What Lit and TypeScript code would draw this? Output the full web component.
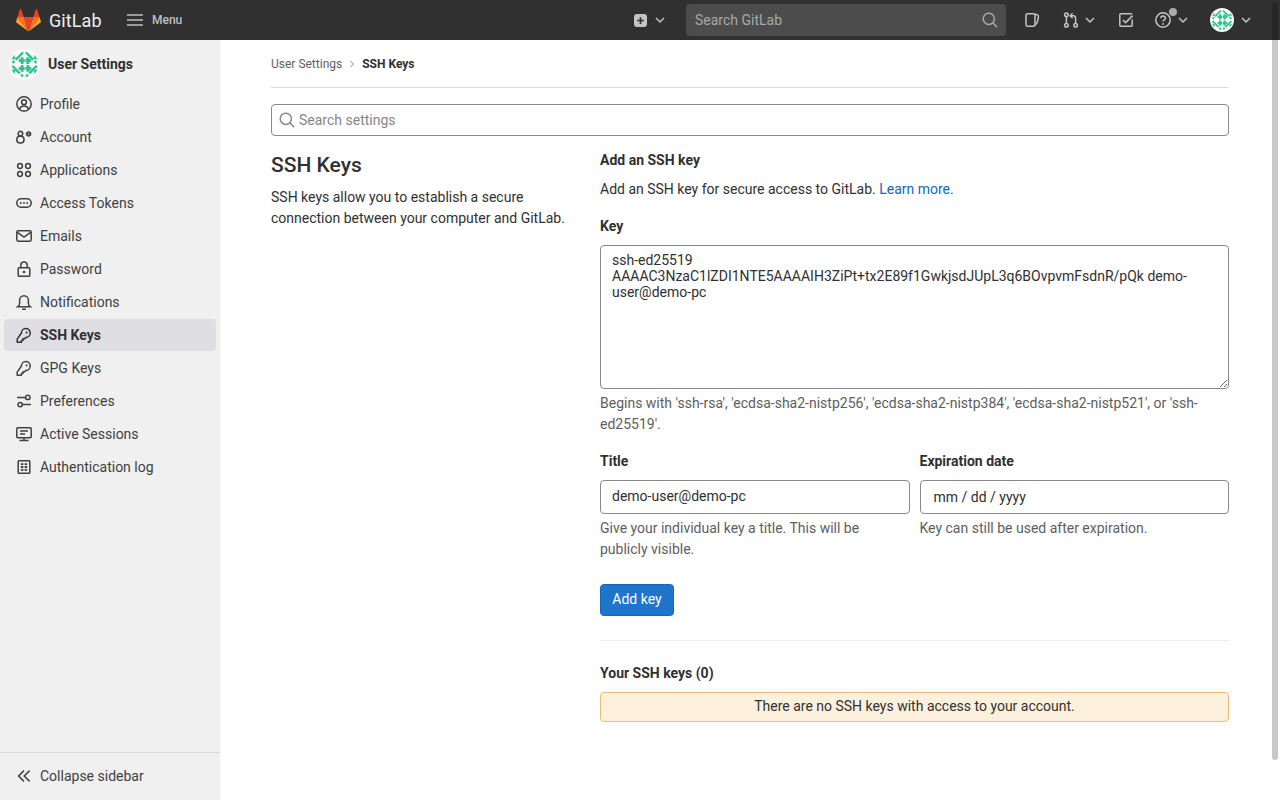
import { LitElement, css, html, svg } from "lit";
import { customElement } from "lit/decorators.js";

const icon = (d: unknown, cls = "") =>
  html`<svg class="ic ${cls}" viewBox="0 0 16 16" fill="none" stroke="currentColor" stroke-width="1.5">${d}</svg>`;

const icons: Record<string, unknown> = {
  profile: svg`<circle cx="8" cy="8" r="7.2"/><circle cx="8" cy="6.2" r="2.4"/><path d="M3.6 13.2c.6-2.2 2.3-3.2 4.4-3.2s3.8 1 4.4 3.2"/>`,
  account: svg`<circle cx="4.4" cy="4.6" r="2.3"/><rect x=".8" y="7.2" width="7.2" height="6.8" rx="3.2"/><path d="M12.6 2.4l2.3 1.3v2.5l-2.3 1.3-2.3-1.3V3.7z" fill="currentColor" stroke-width=".8"/><circle cx="12.6" cy="5" r=".7" fill="#f0f0f0" stroke="none"/>`,
  apps: svg`<circle cx="4" cy="4" r="2.4"/><circle cx="12" cy="4" r="2.4"/><circle cx="4" cy="12" r="2.4"/><circle cx="12" cy="12" r="2.4"/>`,
  token: svg`<rect x=".8" y="3.8" width="14.4" height="8.4" rx="4.2"/><circle cx="4.8" cy="8" r=".9" fill="currentColor" stroke="none"/><circle cx="8" cy="8" r=".9" fill="currentColor" stroke="none"/><circle cx="11.2" cy="8" r=".9" fill="currentColor" stroke="none"/>`,
  mail: svg`<rect x=".8" y="2.8" width="14.4" height="10.4" rx="1.4"/><path d="M1 4.2l7 5 7-5"/>`,
  lock: svg`<rect x="2.2" y="6.8" width="11.6" height="8.4" rx=".8"/><path d="M4.8 6.8V4.2a3.2 3.2 0 0 1 6.4 0v2.6"/><circle cx="8" cy="11" r="1.3" fill="currentColor" stroke="none"/>`,
  bell: svg`<path d="M1.6 12.8c1.4-.8 2-1.6 2-3V6.2a4.4 4.4 0 0 1 8.8 0v3.6c0 1.4.6 2.2 2 3z"/><path d="M6 15.2h4"/>`,
  key: svg`<path d="M5.4 6a4.4 4.4 0 1 1 4.6 4.4L8.6 11.8H7v1.7H5.4v1.7H1.2v-3.1z" stroke-linejoin="round"/><circle cx="10.6" cy="5.4" r="1" fill="currentColor" stroke="none"/>`,
  prefs: svg`<circle cx="11.8" cy="4.4" r="2.2"/><circle cx="4.2" cy="11.6" r="2.2"/><path d="M1 4.6h8.4M6.6 11.6H15"/>`,
  monitor: svg`<rect x=".8" y="1.8" width="14.4" height="10" rx="1"/><path d="M4 5h8M4 8h5M8 12v2.4M3.5 14.4h9"/>`,
  log: svg`<rect x="2.2" y="1.8" width="11.6" height="12.4" rx=".8"/><path d="M4.8 5.2h2.6M8.6 5.2h2.6M4.8 8h2.6M8.6 8h2.6M4.8 10.8h2.6M8.6 10.8h2.6" stroke-width="1.8"/>`,
  collapse: svg`<path d="M8 2.6L2.6 8 8 13.4M13.6 2.6L8.2 8l5.4 5.4"/>`,
  chevron: svg`<path d="M4 6l4 4 4-4"/>`,
  search: svg`<circle cx="6.8" cy="6.8" r="5.6"/><path d="M11 11l4.2 4.2"/>`,
  issues: svg`<path d="M2 3.2c0-.8.5-1.4 1.4-1.4h6.2c.9 0 1.4.6 1.4 1.4v9.6c0 .8-.5 1.4-1.4 1.4H3.4c-.9 0-1.4-.6-1.4-1.4z"/><path d="M11 2.6h1.2c1.6 0 2.6 1.2 2.2 2.8l-1.2 5-2.2 3"/>`,
  mr: svg`<circle cx="3.4" cy="2.8" r="1.8"/><circle cx="3.4" cy="13.2" r="1.8"/><circle cx="12.6" cy="13.2" r="1.8"/><path d="M3.4 4.6v6.8M12.6 11.4V6c0-1.4-.8-2.2-2.2-2.2H7.6M9.6 1.2L7.2 3.8l2.4 2.4"/>`,
  todo: svg`<path d="M14.2 7.5v5.7c0 .6-.4 1-1 1H2.8c-.6 0-1-.4-1-1V2.8c0-.6.4-1 1-1h11.4"/><path d="M5 8l2.6 2.6L14.6 3.6"/>`,
};

// identicon: white disc, broken green diamond, four blobs in the middle
const avatar = (size: number) => html`<svg class="avatar" width=${size} height=${size} viewBox="0 0 32 32">
  <circle cx="16" cy="16" r="16" fill="#fbfcfb"/>
  <g fill="none" stroke="#2bc48f" stroke-width="2.4">
    <path d="M14.6 3.4L3.4 14.6M17.4 3.4l11.2 11.2M3.4 17.4l11.2 11.2M28.6 17.4L17.4 28.6" stroke-dasharray="11 1.6 3"/>
  </g>
  <g fill="#2bc48f">
    <path d="M2.5 21l4 1-1 4zM29.5 21l-4 1 1 4zM2.5 11l4-1-1-4zM29.5 11l-4-1 1-4z"/>
    <path d="M10 10.4h2v-2h3v2h1.2v3H15v2h-3v-2h-2zM17 10.4h1v-2h3v2h2v3h-2v2h-3v-2h-1zM10 18.6h2v-2h3v2h1.2v3H15v2h-3v-2h-2zM17 18.6h1v-2h3v2h2v3h-2v2h-3v-2h-1z"/>
  </g>
</svg>`;

const navItems = [
  { label: "Profile", icon: "profile" },
  { label: "Account", icon: "account" },
  { label: "Applications", icon: "apps" },
  { label: "Access Tokens", icon: "token" },
  { label: "Emails", icon: "mail" },
  { label: "Password", icon: "lock" },
  { label: "Notifications", icon: "bell" },
  { label: "SSH Keys", icon: "key", active: true },
  { label: "GPG Keys", icon: "key" },
  { label: "Preferences", icon: "prefs" },
  { label: "Active Sessions", icon: "monitor" },
  { label: "Authentication log", icon: "log" },
];

const keyValue =
  "ssh-ed25519 AAAAC3NzaC1lZDI1NTE5AAAAIH3ZiPt+tx2E89f1GwkjsdJUpL3q6BOvpvmFsdnR/pQk demo-user@demo-pc";

@customElement("app-root")
export class AppRoot extends LitElement {
  static styles = css`
    :host {
      display: block;
      height: 800px;
      overflow: hidden;
      position: relative;
      font-family: Roboto, "Liberation Sans", sans-serif;
      font-size: 14px;
      color: #303030;
      background: #fff;
    }
    * {
      box-sizing: border-box;
    }
    .ic {
      width: 16px;
      height: 16px;
      flex: none;
      display: block;
    }
    .top {
      height: 40px;
      background: #303030;
      color: #c4c4c4;
      display: flex;
      align-items: center;
    }
    .brand {
      display: flex;
      align-items: center;
      margin-left: 16px;
      width: 111px;
      gap: 8px;
    }
    .brand-name {
      font-size: 18px;
      color: #eee;
      letter-spacing: 0.1px;
    }
    .menu {
      display: flex;
      align-items: center;
      gap: 9px;
      font-size: 12px;
      font-weight: 500;
      color: #bfbfbf;
    }
    .menu svg {
      width: 16px;
      height: 16px;
      stroke-width: 1.4;
    }
    .spacer {
      flex: 1;
    }
    .new {
      display: flex;
      align-items: center;
      gap: 5px;
      margin-right: 18px;
    }
    .plus {
      width: 13px;
      height: 13px;
      border-radius: 3px;
      background: #c4c4c4;
      display: grid;
      place-items: center;
      color: #303030;
    }
    .plus svg {
      width: 9px;
      height: 9px;
      stroke-width: 3;
    }
    .top-search {
      width: 320px;
      height: 32px;
      border-radius: 4px;
      background: #4c4c4c;
      color: #a8a8a8;
      display: flex;
      align-items: center;
      justify-content: space-between;
      padding: 0 8px 0 9px;
      margin-right: 18px;
    }
    .top-icons {
      display: flex;
      align-items: center;
      margin-right: 26px;
    }
    .pair {
      display: flex;
      align-items: center;
      gap: 3px;
      position: relative;
    }
    .gap-issues {
      margin-right: 23px;
    }
    .gap-mr {
      margin-right: 20px;
    }
    .gap-todo {
      margin-right: 21px;
    }
    .gap-help {
      margin-right: 19px;
      gap: 4px;
    }
    .gap-user {
      gap: 4px;
    }
    .dot {
      position: absolute;
      left: 14px;
      top: -4px;
      width: 8px;
      height: 8px;
      border-radius: 50%;
      background: #aaa;
    }
    .avatar {
      flex: none;
      display: block;
    }
    .body {
      display: flex;
      height: 760px;
    }
    .side {
      width: 220px;
      flex: none;
      background: #f0f0f0;
      display: flex;
      flex-direction: column;
    }
    .ctx {
      height: 48px;
      display: flex;
      align-items: center;
      gap: 8px;
      padding-left: 9px;
      font-weight: 700;
      color: #303030;
    }
    .nav {
      flex: 1;
      padding: 0 4px;
    }
    .nav-item {
      height: 32px;
      margin-bottom: 1px;
      display: flex;
      align-items: center;
      gap: 8px;
      padding-left: 12px;
      border-radius: 4px;
      color: #404040;
    }
    .nav-item.active {
      background: #dfdfe3;
      font-weight: 700;
      color: #303030;
    }
    .collapse {
      height: 48px;
      border-top: 1px solid #dcdcdc;
      display: flex;
      align-items: center;
      gap: 8px;
      padding: 0 0 2px 16px;
      color: #404040;
    }
    .main {
      flex: 1;
      padding: 0 51px;
    }
    .crumbs {
      height: 48px;
      border-bottom: 1px solid #dcdcdc;
      display: flex;
      align-items: center;
      font-size: 12px;
      color: #5e5e5e;
      gap: 6px;
    }
    .crumbs svg {
      width: 8px;
      height: 8px;
    }
    .crumbs b {
      color: #303030;
      font-weight: 700;
    }
    .settings-search {
      margin-top: 16px;
      height: 32px;
      border: 1px solid #89888d;
      border-radius: 4px;
      display: flex;
      align-items: center;
      gap: 4px;
      padding-left: 7px;
      color: #868686;
      font-size: 14px;
    }
    .columns {
      display: flex;
      margin-top: 14px;
    }
    .intro {
      width: 329px;
      flex: none;
      padding-top: 1px;
    }
    .intro h1 {
      margin: 0;
      font-size: 21px;
      line-height: 28px;
      font-weight: 500;
      color: #303030;
    }
    .intro p {
      margin: 8px 30px 0 0;
      line-height: 21px;
      color: #303030;
    }
    .form {
      flex: 1;
      min-width: 0;
    }
    .form-title {
      font-weight: 700;
      line-height: 20px;
    }
    .lead {
      margin: 9px 0 0;
      line-height: 20px;
    }
    .lead a {
      color: #1068bf;
      text-decoration: none;
    }
    label,
    .label {
      display: block;
      font-weight: 700;
      line-height: 20px;
    }
    .key-label {
      margin-top: 17px;
    }
    textarea,
    input {
      display: block;
      width: 100%;
      font: inherit;
      color: #303030;
      background: #fff;
      border: 1px solid #89888d;
      border-radius: 4px;
      outline: none;
    }
    textarea {
      margin-top: 9px;
      height: 144px;
      padding: 6px 11px;
      line-height: 16px;
    }
    .hint {
      margin: 4px 0 0;
      color: #5e5e5e;
      line-height: 21px;
    }
    .pair-fields {
      display: grid;
      grid-template-columns: 1fr 1fr;
      gap: 10px;
      margin-top: 16px;
    }
    .pair-fields input {
      margin-top: 9px;
      height: 34px;
      padding: 0 11px 2px;
    }
    .pair-fields input.date {
      padding: 0 13px;
    }
    .add {
      margin-top: 24px;
      height: 32px;
      width: 74px;
      background: #1f75cb;
      color: #fff;
      border: 1px solid #1068bf;
      border-radius: 4px;
      font: inherit;
      padding: 0 0 2px;
    }
    hr {
      border: 0;
      border-top: 1px solid #ececef;
      margin: 24px 0 0;
    }
    .your {
      margin-top: 22px;
    }
    .empty {
      margin-top: 9px;
      height: 30px;
      padding-bottom: 2px;
      background: #fdf1dd;
      border: 1px solid #e9be74;
      border-radius: 4px;
      display: flex;
      align-items: center;
      justify-content: center;
      color: #303030;
    }
    .scrollbar {
      position: absolute;
      top: 40px;
      right: 2px;
      width: 6px;
      height: 720px;
      background: #c8c8c8;
      border-radius: 0 0 3px 3px;
    }
    .scrollbar-top {
      position: absolute;
      top: 2px;
      right: 2px;
      width: 6px;
      height: 38px;
      background: #262626;
      border-radius: 3px 3px 0 0;
    }
  `;

  render() {
    return html`
      <div class="top">
        <div class="brand">
          <svg width="25" height="24" viewBox="0 0 25 24">
            <path d="M12.5 23.5L.4 14.6c-.4-.3-.5-.7-.3-1.1L1.5 9z" fill="#fca326"/>
            <path d="M12.5 23.5l12.1-8.9c.4-.3.5-.7.3-1.1L23.5 9z" fill="#fca326"/>
            <path d="M12.5 23.5L7.9 9H1.5z" fill="#fc6d26"/>
            <path d="M12.5 23.5L17.1 9h6.4z" fill="#fc6d26"/>
            <path d="M12.5 23.5L7.9 9h9.2z" fill="#e24329"/>
            <path d="M1.5 9L4 1c.1-.4.7-.4.9 0L7.9 9z" fill="#e24329"/>
            <path d="M23.5 9L21 1c-.1-.4-.7-.4-.9 0L17.1 9z" fill="#e24329"/>
          </svg>
          <span class="brand-name">GitLab</span>
        </div>
        <div class="menu">
          ${icon(svg`<path d="M0 3h16M0 8h16M0 13h16"/>`)}
          <span>Menu</span>
        </div>
        <div class="spacer"></div>
        <div class="new">
          <span class="plus">${icon(svg`<path d="M8 2v12M2 8h12"/>`)}</span>
          ${icon(icons.chevron)}
        </div>
        <div class="top-search">
          <span>Search GitLab</span>
          ${icon(icons.search)}
        </div>
        <div class="top-icons">
          <div class="gap-issues">${icon(icons.issues)}</div>
          <div class="pair gap-mr">${icon(icons.mr)}${icon(icons.chevron)}</div>
          <div class="gap-todo">${icon(icons.todo)}</div>
          <div class="pair gap-help">
            ${icon(svg`<circle cx="8" cy="8" r="7.2"/><path d="M5.8 6.2c0-3 4.6-3 4.6 0 0 1.8-2.3 1.7-2.3 3.4"/><circle cx="8.1" cy="12" r=".9" fill="currentColor" stroke="none"/>`)}
            ${icon(icons.chevron)}
            <span class="dot"></span>
          </div>
          <div class="pair gap-user">${avatar(24)}${icon(icons.chevron)}</div>
        </div>
      </div>
      <div class="body">
        <aside class="side">
          <div class="ctx">${avatar(31)}<span>User Settings</span></div>
          <nav class="nav">
            ${navItems.map(
              (item) => html`<div class="nav-item ${item.active ? "active" : ""}">
                ${icon(icons[item.icon])}<span>${item.label}</span>
              </div>`
            )}
          </nav>
          <div class="collapse">${icon(icons.collapse)}<span>Collapse sidebar</span></div>
        </aside>
        <main class="main">
          <div class="crumbs">
            <span>User Settings</span>
            ${icon(svg`<path d="M5 2l6 6-6 6"/>`)}
            <b>SSH Keys</b>
          </div>
          <div class="settings-search">${icon(icons.search)}<span>Search settings</span></div>
          <div class="columns">
            <section class="intro">
              <h1>SSH Keys</h1>
              <p>SSH keys allow you to establish a secure connection between your computer and GitLab.</p>
            </section>
            <section class="form">
              <div class="form-title">Add an SSH key</div>
              <p class="lead">Add an SSH key for secure access to GitLab. <a>Learn more.</a></p>
              <label class="key-label">Key</label>
              <textarea .value=${keyValue}></textarea>
              <p class="hint">Begins with 'ssh-rsa', 'ecdsa-sha2-nistp256', 'ecdsa-sha2-nistp384', 'ecdsa-sha2-nistp521', or 'ssh-ed25519'.</p>
              <div class="pair-fields">
                <div>
                  <label>Title</label>
                  <input .value=${"demo-user@demo-pc"} />
                  <p class="hint">Give your individual key a title. This will be publicly visible.</p>
                </div>
                <div>
                  <label>Expiration date</label>
                  <input class="date" .value=${"mm / dd / yyyy"} />
                  <p class="hint">Key can still be used after expiration.</p>
                </div>
              </div>
              <button class="add">Add key</button>
              <hr />
              <div class="label your">Your SSH keys (0)</div>
              <div class="empty">There are no SSH keys with access to your account.</div>
            </section>
          </div>
        </main>
      </div>
      <div class="scrollbar-top"></div>
      <div class="scrollbar"></div>
    `;
  }
}
